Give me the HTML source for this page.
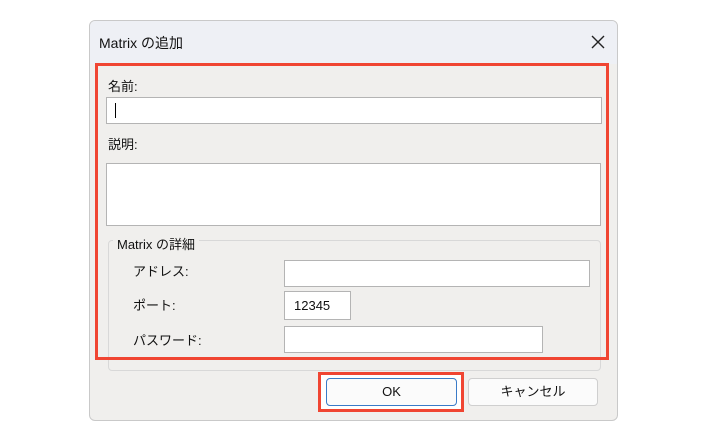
<!DOCTYPE html>
<html><head><meta charset="utf-8"><style>
body{margin:0;width:708px;height:443px;background:#fff;position:relative;overflow:hidden;font-family:"Liberation Sans","Noto Sans CJK JP",sans-serif;font-size:13px;color:#111}
.a{position:absolute}
.in{position:absolute;background:#fff;border:1px solid #b4b4b4;box-sizing:border-box}
</style></head><body>
<div class="a" style="left:89px;top:20px;width:529px;height:401px;background:#f0efed;border:1px solid #c9c9c9;border-radius:6px;box-sizing:border-box;overflow:hidden">
 <div class="a" style="left:0;top:0;right:0;height:43px;background:#eef0f5"></div>
</div>
<div class="a" style="left:99px;top:33px;font-size:14px">Matrix の追加</div>
<svg class="a" style="left:591px;top:35px" width="14" height="14"><path d="M1 1L13 13M13 1L1 13" stroke="#222" stroke-width="1.4"/></svg>
<div class="a" style="left:108px;top:240px;width:493px;height:131px;border:1px solid #d8d8d8;border-radius:4px;box-sizing:border-box"></div>
<div class="a" style="left:113px;top:234px;background:#f0efed;padding:0 4px">Matrix の詳細</div>
<div class="a" style="left:108px;top:76px">名前:</div>
<div class="in" style="left:106px;top:97px;width:496px;height:27px"><div class="a" style="left:8px;top:5px;width:1px;height:15px;background:#000"></div></div>
<div class="a" style="left:108px;top:134px">説明:</div>
<div class="in" style="left:106px;top:163px;width:495px;height:63px"></div>
<div class="a" style="left:133px;top:261px">アドレス:</div>
<div class="in" style="left:284px;top:260px;width:306px;height:27px"></div>
<div class="a" style="left:133px;top:295px">ポート:</div>
<div class="in" style="left:284px;top:291px;width:67px;height:29px;padding:6px 0 0 9px;font-size:13px">12345</div>
<div class="a" style="left:133px;top:330px">パスワード:</div>
<div class="in" style="left:284px;top:326px;width:259px;height:27px"></div>
<div class="a" style="left:95px;top:63px;width:514px;height:297px;border:3px solid #f04532;box-sizing:border-box"></div>
<div class="a" style="left:318px;top:372px;width:146px;height:40px;border:3px solid #f04532;box-sizing:border-box;background:#fff"></div>
<div class="a" style="left:326px;top:378px;width:131px;height:28px;border:1.5px solid #3a7bc8;border-radius:4px;box-sizing:border-box;background:#fbfbfb;text-align:center;line-height:25px">OK</div>
<div class="a" style="left:468px;top:378px;width:130px;height:28px;border:1px solid #cfcfcf;border-radius:4px;box-sizing:border-box;background:#fbfbfb;text-align:center;line-height:26px">キャンセル</div>
</body></html>
